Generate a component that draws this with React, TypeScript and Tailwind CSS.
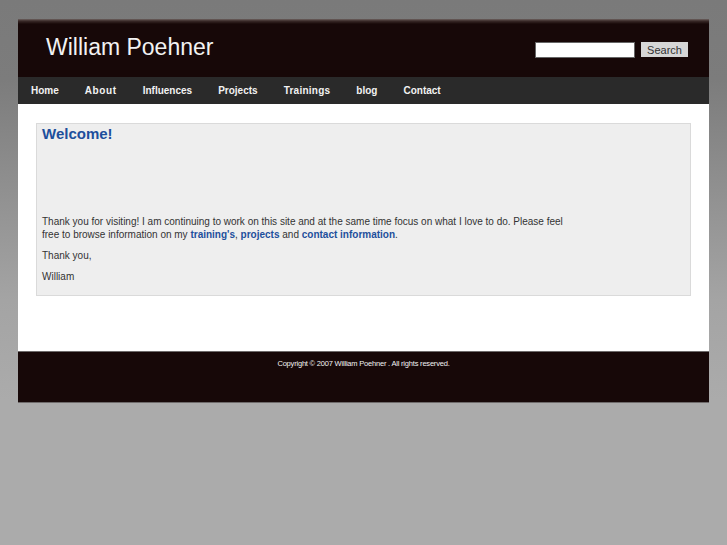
import React from "react";

const navItems: { label: string; cls: string }[] = [
  { label: "Home", cls: "tracking-normal" },
  { label: "About", cls: "tracking-[0.6px]" },
  { label: "Influences", cls: "tracking-normal" },
  { label: "Projects", cls: "tracking-normal" },
  { label: "Trainings", cls: "tracking-[0.25px]" },
  { label: "blog", cls: "tracking-normal" },
  { label: "Contact", cls: "tracking-normal" },
];

export default function App() {
  return (
    <div
      className="min-h-[545px] w-full bg-[linear-gradient(to_bottom,#7a7a7a_0px,#7c7c7c_80px,#a4a4a4_300px,#ababab_400px)] pt-[19px] pb-[142px]"
      style={{ fontFamily: '"Liberation Sans", Arial, sans-serif' }}
    >
      <div className="mx-[18px] flex w-[691px] flex-col">
        {/* Header */}
        <div className="flex h-[58px] items-start justify-between bg-[linear-gradient(to_bottom,#6e6260_0px,#3a2a28_2px,#170808_5px)] pl-[28px] pr-[21px]">
          <div className="pt-[14px] text-[23px] leading-[28px] text-[#f2f2f2]">William Poehner</div>
          <div className="flex items-start gap-[6px] pt-[23px]">
            <input className="h-[16px] w-[100px] border border-[#666] bg-white text-[11px]" />
            <button className="flex h-[15px] w-[47px] items-center justify-center bg-[#d6d6d6] pt-[2px] text-[11px] leading-none text-[#333]">
              Search
            </button>
          </div>
        </div>
        {/* Nav */}
        <div className="flex h-[27px] items-center bg-[#2a2a2a]">
          {navItems.map((n) => (
            <a
              key={n.label}
              className={"px-[13px] text-[10px] font-bold leading-none text-[#f2f2f2] " + n.cls}
            >
              {n.label}
            </a>
          ))}
        </div>
        {/* Content */}
        <div className="bg-white px-[18px] pt-[19px] pb-[55px]">
          <div className="h-[173px] border border-[#dadada] bg-[#eeeeee] px-[5px]">
            <h1 className="text-[15px] font-bold leading-[20px] text-[#1d4f9c]">Welcome!</h1>
            <div className="mt-[71px] text-[10px] leading-[13px] text-[#333]">
              <p className="w-[530px]">
                Thank you for visiting! I am continuing to work on this site and at the same time focus on what I love to do. Please feel free to browse information on my{" "}
                <a className="font-bold text-[#1d4f9c]">training's</a>,{" "}
                <a className="font-bold text-[#1d4f9c]">projects</a> and{" "}
                <a className="font-bold text-[#1d4f9c]">contact information</a>.
              </p>
              <p className="mt-[8px]">Thank you,</p>
              <p className="mt-[8px]">William</p>
            </div>
          </div>
        </div>
        {/* Footer */}
        <div className="flex h-[52px] justify-center border-t border-b border-[#6e6a6a] bg-[#170808] pt-[7px]">
          <div className="text-[7.5px] leading-[10px] tracking-[-0.2px] text-[#f2f2f2]">
            Copyright © 2007 William Poehner . All rights reserved.
          </div>
        </div>
      </div>
    </div>
  );
}
